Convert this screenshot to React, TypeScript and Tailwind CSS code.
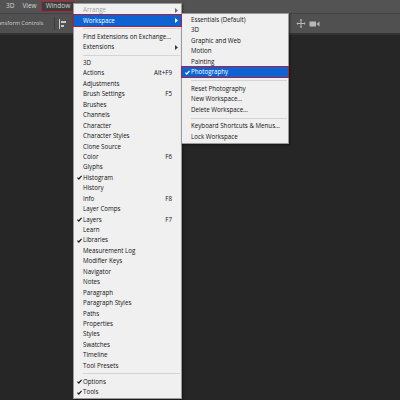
import React from "react";

type Item =
  | { sep: true }
  | { label: string; key?: string; check?: boolean; sub?: boolean; disabled?: boolean; active?: boolean; sep?: false };

const mainItems: Item[] = [
  { label: "Arrange", sub: true, disabled: true },
  { label: "Workspace", sub: true, active: true },
  { sep: true },
  { label: "Find Extensions on Exchange..." },
  { label: "Extensions", sub: true },
  { sep: true },
  { label: "3D" },
  { label: "Actions", key: "Alt+F9" },
  { label: "Adjustments" },
  { label: "Brush Settings", key: "F5" },
  { label: "Brushes" },
  { label: "Channels" },
  { label: "Character" },
  { label: "Character Styles" },
  { label: "Clone Source" },
  { label: "Color", key: "F6" },
  { label: "Glyphs" },
  { label: "Histogram", check: true },
  { label: "History" },
  { label: "Info", key: "F8" },
  { label: "Layer Comps" },
  { label: "Layers", key: "F7", check: true },
  { label: "Learn" },
  { label: "Libraries", check: true },
  { label: "Measurement Log" },
  { label: "Modifier Keys" },
  { label: "Navigator" },
  { label: "Notes" },
  { label: "Paragraph" },
  { label: "Paragraph Styles" },
  { label: "Paths" },
  { label: "Properties" },
  { label: "Styles" },
  { label: "Swatches" },
  { label: "Timeline" },
  { label: "Tool Presets" },
  { sep: true },
  { label: "Options", check: true },
  { label: "Tools", check: true },
];

const subItems: Item[] = [
  { label: "Essentials (Default)" },
  { label: "3D" },
  { label: "Graphic and Web" },
  { label: "Motion" },
  { label: "Painting" },
  { label: "Photography", check: true, active: true },
  { sep: true },
  { label: "Reset Photography" },
  { label: "New Workspace..." },
  { label: "Delete Workspace..." },
  { sep: true },
  { label: "Keyboard Shortcuts & Menus..." },
  { label: "Lock Workspace" },
];

function Check({ white }: { white?: boolean }) {
  return (
    <svg width="5" height="5" viewBox="0 0 5 5" className="block">
      <path d="M0.4 2.6 L1.8 4 L4.6 0.8" fill="none" stroke={white ? "#ffffff" : "#1a1a1a"} strokeWidth="1.2" />
    </svg>
  );
}

function Arrow({ white, faded }: { white?: boolean; faded?: boolean }) {
  return (
    <svg width="3" height="5" viewBox="0 0 3 5" className="block">
      <path d="M0 0 L3 2.5 L0 5 Z" fill={white ? "#ffffff" : faded ? "#6a6a6a" : "#3a3a3a"} />
    </svg>
  );
}

function MenuList({ items, sepClass }: { items: Item[]; sepClass: string }) {
  return (
    <>
      {items.map((it, i) => {
        if (it.sep) {
          return (
            <div key={i} className={`${sepClass} flex items-center pl-[9px] pr-[1px]`}>
              <div className="h-px w-full bg-[#d4d4d4]" />
            </div>
          );
        }
        const row = it.active
          ? "bg-[#0d63d2] text-white outline-[1.5px] outline-solid outline-[#ad1f3c] relative z-10"
          : it.disabled
          ? "text-[#a3a3a3]"
          : "text-[#111111]";
        return (
          <div key={i} className={`h-[10.45px] flex items-center ${row}`}>
            <div className="w-[9px] flex justify-center pl-[1px]">{it.check && <Check white={it.active} />}</div>
            <span className="flex-1 whitespace-nowrap leading-none">{it.label}</span>
            {it.key && <span className="leading-none pr-[9px]">{it.key}</span>}
            {it.sub && (
              <div className="w-[9px] flex justify-center">
                <Arrow white={it.active} faded={it.disabled} />
              </div>
            )}
          </div>
        );
      })}
    </>
  );
}

export default function App() {
  return (
    <div className="w-[400px] h-[400px] relative overflow-hidden bg-[#262626] font-['Open_Sans',sans-serif] flex flex-col">
      {/* menu bar */}
      <div className="h-[13px] bg-[#535353] flex items-center text-[6.5px] text-[#d4d4d4] pl-[6px]">
        <span className="leading-none">3D</span>
        <span className="leading-none ml-[8px]">View</span>
        <span className="ml-[4px] h-[11.5px] px-[4px] flex items-center bg-[#3d3d3d] border-[1.5px] border-[#b0203a] leading-none">Window</span>
      </div>
      <div className="h-px bg-[#424242]" />
      {/* options bar */}
      <div className="h-[19px] bg-[#505050] flex items-center text-[5.6px] text-[#d2d2d2]">
        <span className="-ml-[2px] leading-none whitespace-nowrap">ansform Controls</span>
        <div className="ml-[11px] w-px h-[13px] bg-[#3c3c3c]" />
        <svg width="8" height="10" viewBox="0 0 8 10" className="ml-[4px]">
          <path d="M0.5 0 V10" stroke="#c8c8c8" strokeWidth="1" />
          <rect x="2" y="2" width="5" height="2" fill="#c8c8c8" />
          <rect x="2" y="6" width="3" height="2" fill="#c8c8c8" />
        </svg>
        <div className="ml-auto mr-[80px] flex items-center gap-[3px]">
          <svg width="10" height="9" viewBox="0 0 10 9">
            <path d="M5 0.5 V8.5 M1 4.5 H9" stroke="#b8b8b8" strokeWidth="1" />
            <path d="M5 0 L3.6 1.6 H6.4 Z M5 9 L3.6 7.4 H6.4 Z M0.5 4.5 L2 3.1 V5.9 Z M9.5 4.5 L8 3.1 V5.9 Z" fill="#b8b8b8" />
          </svg>
          <svg width="11" height="6" viewBox="0 0 11 6">
            <rect x="0.5" y="0.5" width="6.5" height="5" fill="#b8b8b8" />
            <path d="M7.5 3 L10.5 0.5 V5.5 Z" fill="#b8b8b8" />
          </svg>
        </div>
      </div>
      <div className="h-[2px] bg-[#333333]" />
      <div className="flex-1 bg-[#262626]" />

      {/* Window menu */}
      <div className="absolute left-[73px] top-[3px] w-[109px] bg-[#f0f0f0] border border-[#9a9a9a] pt-[1px] text-[6.2px] shadow-[1px_1px_2px_rgba(0,0,0,0.4)]">
        <MenuList items={mainItems} sepClass="h-[5.6px]" />
      </div>

      {/* Workspace submenu */}
      <div className="absolute left-[181px] top-[13px] w-[108px] bg-[#f0f0f0] border border-[#9a9a9a] pt-[0.8px] pb-[0.6px] text-[6.2px] shadow-[1px_1px_2px_rgba(0,0,0,0.45)]">
        <MenuList items={subItems} sepClass="h-[6.2px]" />
      </div>
    </div>
  );
}
